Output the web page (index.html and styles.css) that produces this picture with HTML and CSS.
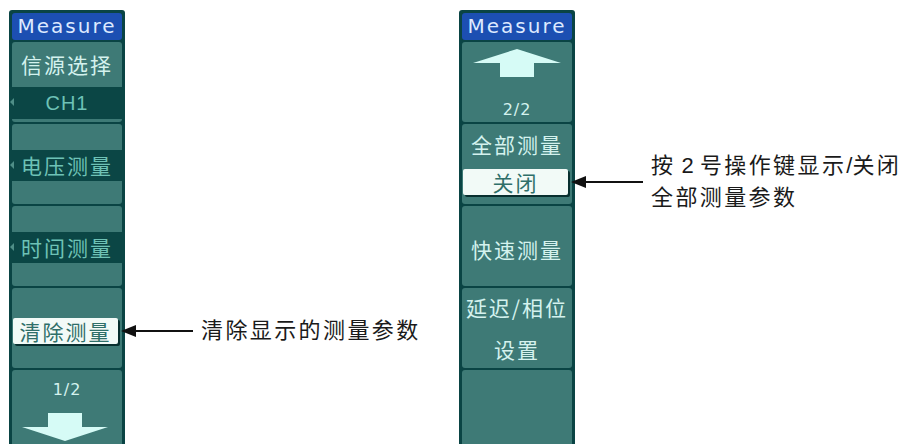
FILE: index.html
```html
<!DOCTYPE html>
<html>
<head>
  <title>Measure Menu</title>
  <link rel="stylesheet" href="styles.css">
</head>
<body>
  <div class="page">
    <!-- page 1/2 -->
    <div class="panel">
      <div class="title">Measure</div>

      <div class="item item-value">
        <div class="label">信源选择</div>
        <div class="band mark value">CH1</div>
      </div>

      <div class="item item-sub">
        <div class="band mark">电压测量</div>
      </div>

      <div class="item item-sub">
        <div class="band mark">时间测量</div>
      </div>

      <div class="item item-action">
        <div class="chip">清除测量
          <div class="callout">
            <span class="arrow"></span>
            <span class="note">清除显示的测量参数</span>
          </div>
        </div>
      </div>

      <div class="item item-page item-last">
        <div class="page-num">1/2</div>
        <svg class="page-arrow down" width="86" height="28" viewBox="0 0 86 28">
          <polygon points="26,0 60,0 60,14 86,14 43,28 0,14 26,14" fill="#d6fbf6"/>
        </svg>
      </div>
    </div>

    <!-- page 2/2 -->
    <div class="panel">
      <div class="title">Measure</div>

      <div class="item item-page up-page">
        <svg class="page-arrow up" width="88" height="28" viewBox="0 0 88 28">
          <polygon points="44,0 88,14 61,14 61,28 27,28 27,14 0,14" fill="#d6fbf6"/>
        </svg>
        <div class="page-num">2/2</div>
      </div>

      <div class="item item-toggle">
        <div class="label">全部测量</div>
        <div class="chip">关闭
          <div class="callout">
            <span class="arrow"></span>
            <span class="note">按<span class="latin"> 2 </span>号操作键显示<span class="latin">/</span>关闭<br>全部测量参数</span>
          </div>
        </div>
      </div>

      <div class="item item-center">
        <div class="label">快速测量</div>
      </div>

      <div class="item item-two">
        <div class="label">延迟/相位<br>设置</div>
      </div>

      <div class="item item-last"></div>
    </div>
  </div>
</body>
</html>
```

FILE: styles.css
```css
body {
  margin: 0;
  background-color: #fff;
  font-family: "Noto Sans CJK SC", sans-serif;
  overflow: hidden;
}

.page {
  display: flex;
  gap: 334px;
  padding: 10px 0 0 9px;
  height: 434px;
}

.panel {
  width: 110px;
  height: 431px;
  padding: 3px 3px 0;
  background-color: #0a4444;
  border-radius: 3px 3px 0 0;
  display: flex;
  flex-direction: column;
  gap: 2px;
}

.title {
  height: 27px;
  flex-shrink: 0;
  background-color: #1c4fb2;
  border-radius: 3px;
  color: #dde9ff;
  font-family: "DejaVu Sans", sans-serif;
  font-size: 20px;
  letter-spacing: 2px;
  line-height: 27px;
  text-align: center;
}

.item {
  height: 80px;
  flex-shrink: 0;
  background-color: #3e7a76;
  border-radius: 3px;
  display: flex;
  flex-direction: column;
  align-items: center;
  color: #d4f2ee;
  font-size: 21px;
  letter-spacing: 2px;
}

.item-last {
  height: 74px;
  border-radius: 3px 3px 0 0;
}

.label {
  line-height: 40px;
  white-space: nowrap;
}

.band {
  position: relative;
  align-self: stretch;
  margin: 0 -3px;
  height: 31px;
  background-color: #0b4645;
  color: #6ec2b6;
  line-height: 31px;
  text-align: center;
}

.mark::before {
  content: "";
  position: absolute;
  left: 1px;
  top: 11px;
  border-right: 4px solid #4f8e87;
  border-top: 4px solid transparent;
  border-bottom: 4px solid transparent;
}

.value {
  font-family: "Liberation Sans", sans-serif;
  font-size: 20px;
  letter-spacing: 1px;
}

.item-value .label {
  height: 45px;
  line-height: 45px;
}

.item-value .band {
  height: 32px;
  line-height: 32px;
}

.item-sub {
  padding-top: 26px;
  height: 54px;
}

.item-action {
  padding-top: 30px;
  height: 50px;
}

.chip {
  position: relative;
  align-self: flex-start;
  margin-left: 1px;
  width: 105px;
  height: 26px;
  background-color: #f2faf7;
  border-radius: 2px;
  box-shadow: 2px 2px 0 #082f2f;
  color: #2f6f69;
  line-height: 26px;
  text-align: center;
}

.item-toggle .label {
  line-height: 40px;
  height: 40px;
}

.item-toggle .chip {
  margin-top: 5px;
}

.item-center {
  padding-top: 6px;
  height: 74px;
  justify-content: center;
}

.item-two {
  justify-content: center;
}

.item-two .label {
  line-height: 42px;
  text-align: center;
}

.item-page {
  padding-top: 10px;
  height: 70px;
}

.item-page.item-last {
  height: 64px;
}

.page-num {
  font-family: "DejaVu Sans", sans-serif;
  font-size: 16px;
  letter-spacing: 1px;
  line-height: 20px;
  color: #d4f2ee;
}

.page-arrow {
  display: block;
  align-self: flex-start;
}

.page-arrow.down {
  margin: 13px 0 0 10px;
}

.up-page {
  padding-top: 7px;
  height: 73px;
}

.page-arrow.up {
  margin-left: 11px;
}

.up-page .page-num {
  margin-top: 23px;
}

/* annotation next to the highlighted key */
.callout {
  position: absolute;
  left: calc(100% + 3px);
  top: 50%;
  transform: translateY(-50%);
  display: flex;
  align-items: center;
  gap: 8px;
  color: #1a1a1a;
  font-family: "Liberation Sans", "Noto Sans CJK SC", sans-serif;
  font-size: 22px;
  letter-spacing: 2.4px;
  line-height: 32px;
  text-align: left;
  white-space: nowrap;
}

.latin {
  letter-spacing: 0;
}

.arrow {
  display: flex;
  align-items: center;
  width: 72px;
}

.arrow::before {
  content: "";
  border-right: 15px solid #111;
  border-top: 6px solid transparent;
  border-bottom: 6px solid transparent;
}

.arrow::after {
  content: "";
  flex: 1;
  height: 2px;
  background-color: #111;
}
```
